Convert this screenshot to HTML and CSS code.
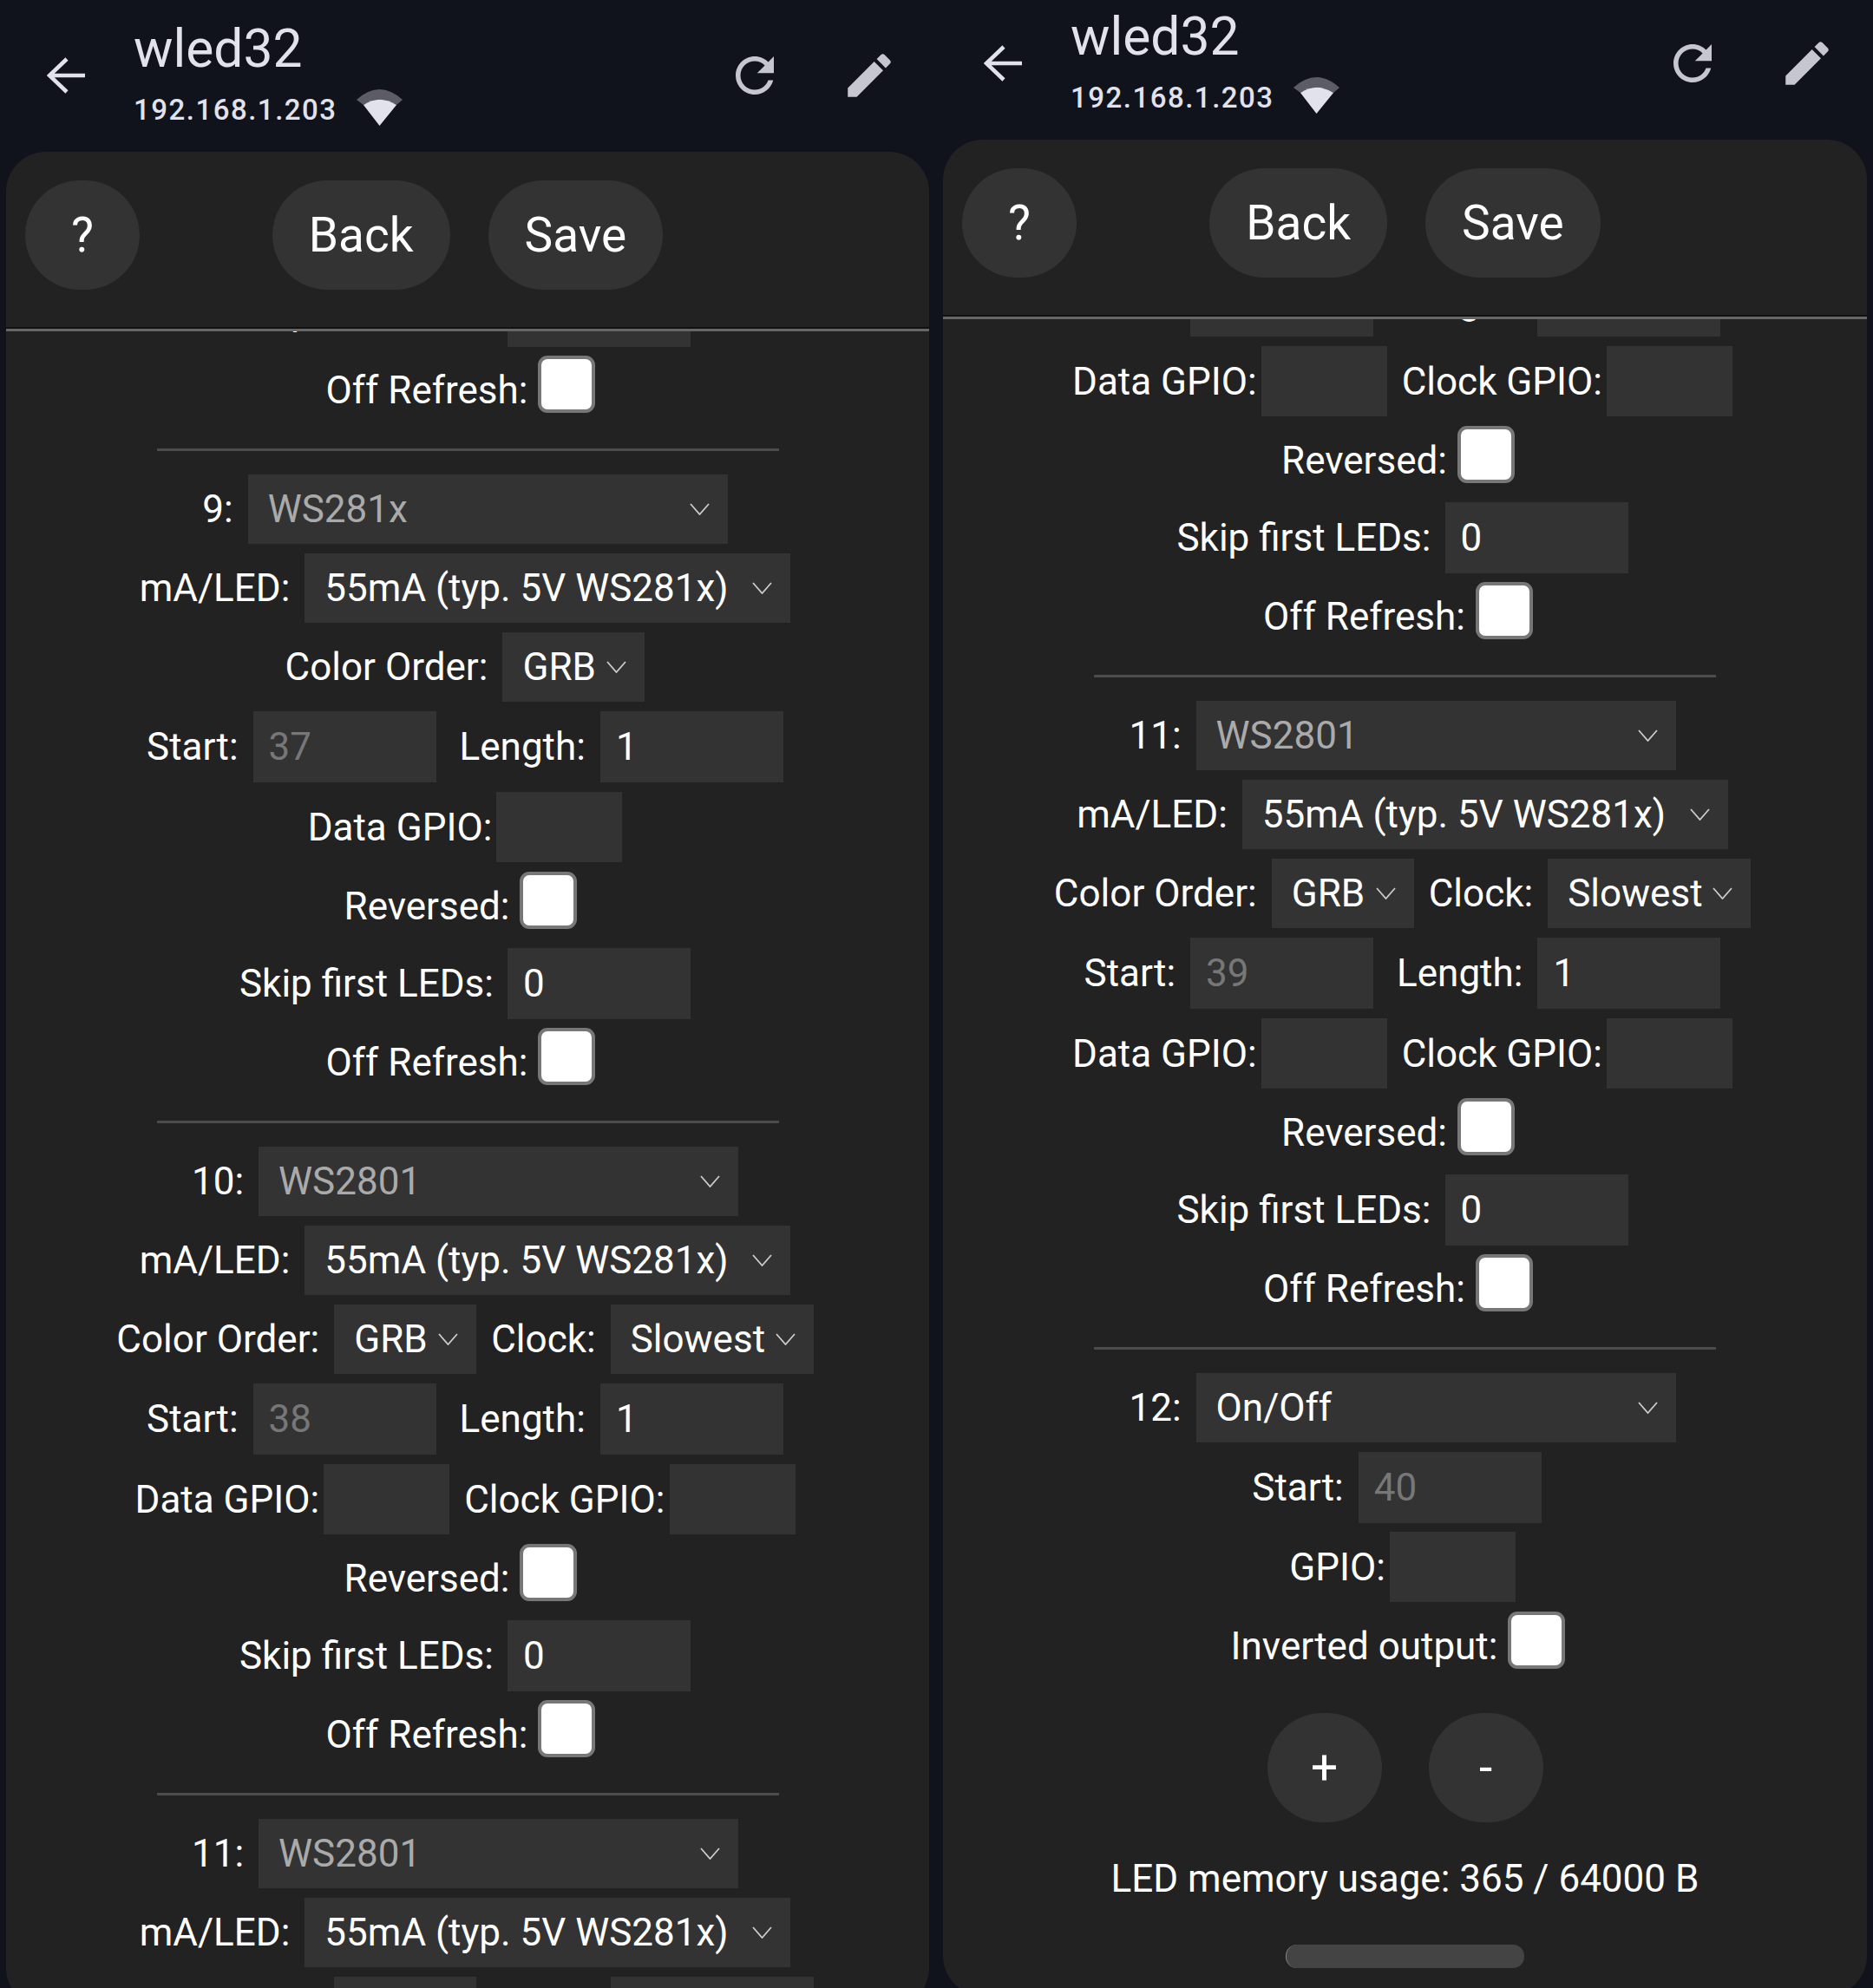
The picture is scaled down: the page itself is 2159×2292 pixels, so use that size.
FILE: index.html
```html
<!DOCTYPE html>
<html lang="en">

<head>
    <meta charset="UTF-8" />
    <meta name="viewport" content="width=device-width, initial-scale=1.0" />
    <title>wled32 LED settings</title>
    <link rel="stylesheet" href="styles.css">
</head>

<body>
    <svg class="defs" width="0" height="0">
        <defs>
            <symbol id="chev" viewBox="0 0 23 14"><path d="M1 1l10.5 12L22 1" fill="none" stroke="currentColor" stroke-width="1.8" /></symbol>
            <symbol id="back" viewBox="0 0 44 42"><path d="M44 21H3M23 2L3 21l20 19" fill="none" stroke="currentColor" stroke-width="4.6" /></symbol>
            <symbol id="wifi" viewBox="0 0 53 42">
                <path d="M0 12Q26.500 -12 53 12L46 18Q26.500 5.400 8 18Z" fill="#5b5c66" />
                <path d="M8 18Q26.500 5.400 46 18L26.500 42Z" fill="#e2e2ec" />
            </symbol>
            <symbol id="refresh" viewBox="0 0 24 24"><path d="M17.650 6.350C16.200 4.900 14.210 4 12 4c-4.420 0-7.990 3.580-7.990 8s3.570 8 7.990 8c3.730 0 6.840-2.550 7.730-6h-2.080c-.82 2.330-3.040 4-5.650 4-3.310 0-6-2.690-6-6s2.690-6 6-6c1.660 0 3.140.69 4.220 1.780L13 11h7V4l-2.350 2.350z" fill="currentColor" /></symbol>
            <symbol id="edit" viewBox="0 0 24 24"><path d="M3 17.250V21h3.750L17.810 9.940l-3.750-3.750L3 17.250zM20.710 7.040c.39-.39.39-1.020 0-1.410l-2.340-2.340c-.39-.39-1.020-.39-1.410 0l-1.830 1.830 3.750 3.750 1.830-1.830z" fill="currentColor" /></symbol>
        </defs>
    </svg>

    <div class="phones">

        <!-- left screenshot -->
        <div class="phone phone-left">
            <div class="header">
                <svg class="back"><use href="#back" /></svg>
                <div class="device">
                    <div class="device-name">wled32</div>
                    <div class="device-ip">192.168.1.203 <svg class="wifi"><use href="#wifi" /></svg></div>
                </div>
                <div class="actions">
                    <svg class="action"><use href="#refresh" /></svg>
                    <svg class="action"><use href="#edit" /></svg>
                </div>
            </div>
            <div class="panel">
                <div class="topbar">
                    <div class="btn btn-round">?</div>
                    <div class="topbar-main">
                        <div class="btn">Back</div>
                        <div class="btn">Save</div>
                    </div>
                </div>
                <div class="scroll">
                    <div class="scroll-inner scroll-left">
                        <div class="row row-skip">
                            <span class="label">Skip first LEDs:</span>
                            <div class="field num">0</div>
                        </div>
                        <div class="row row-check">
                            <span class="label">Off Refresh:</span>
                            <span class="check"></span>
                        </div>
                        <hr class="divider">

                        <div class="row">
                            <span class="label">9:</span>
                            <div class="select sel-type dim"><span>WS281x</span><svg class="chev"><use href="#chev" /></svg></div>
                        </div>
                        <div class="row">
                            <span class="label">mA/LED:</span>
                            <div class="select sel-ma"><span>55mA (typ. 5V WS281x)</span><svg class="chev"><use href="#chev" /></svg></div>
                        </div>
                        <div class="row">
                            <span class="label">Color Order:</span>
                            <div class="select sel-order"><span>GRB</span><svg class="chev"><use href="#chev" /></svg></div>
                        </div>
                        <div class="row row-num">
                            <span class="label">Start:</span>
                            <div class="field num faded">37</div>
                            <span class="label label-next">Length:</span>
                            <div class="field num">1</div>
                        </div>
                        <div class="row row-pin">
                            <span class="label">Data GPIO:</span>
                            <div class="field pin"></div>
                        </div>
                        <div class="row row-check row-check-wide">
                            <span class="label">Reversed:</span>
                            <span class="check"></span>
                        </div>
                        <div class="row row-skip">
                            <span class="label">Skip first LEDs:</span>
                            <div class="field num">0</div>
                        </div>
                        <div class="row row-check">
                            <span class="label">Off Refresh:</span>
                            <span class="check"></span>
                        </div>
                        <hr class="divider">

                        <div class="row">
                            <span class="label">10:</span>
                            <div class="select sel-type dim"><span>WS2801</span><svg class="chev"><use href="#chev" /></svg></div>
                        </div>
                        <div class="row">
                            <span class="label">mA/LED:</span>
                            <div class="select sel-ma"><span>55mA (typ. 5V WS281x)</span><svg class="chev"><use href="#chev" /></svg></div>
                        </div>
                        <div class="row">
                            <span class="label">Color Order:</span>
                            <div class="select sel-order"><span>GRB</span><svg class="chev"><use href="#chev" /></svg></div>
                            <span class="label label-next">Clock:</span>
                            <div class="select sel-clock"><span>Slowest</span><svg class="chev"><use href="#chev" /></svg></div>
                        </div>
                        <div class="row row-num">
                            <span class="label">Start:</span>
                            <div class="field num faded">38</div>
                            <span class="label label-next">Length:</span>
                            <div class="field num">1</div>
                        </div>
                        <div class="row row-pin">
                            <span class="label">Data GPIO:</span>
                            <div class="field pin"></div>
                            <span class="label label-next">Clock GPIO:</span>
                            <div class="field pin"></div>
                        </div>
                        <div class="row row-check row-check-wide">
                            <span class="label">Reversed:</span>
                            <span class="check"></span>
                        </div>
                        <div class="row row-skip">
                            <span class="label">Skip first LEDs:</span>
                            <div class="field num">0</div>
                        </div>
                        <div class="row row-check">
                            <span class="label">Off Refresh:</span>
                            <span class="check"></span>
                        </div>
                        <hr class="divider">

                        <div class="row">
                            <span class="label">11:</span>
                            <div class="select sel-type dim"><span>WS2801</span><svg class="chev"><use href="#chev" /></svg></div>
                        </div>
                        <div class="row">
                            <span class="label">mA/LED:</span>
                            <div class="select sel-ma"><span>55mA (typ. 5V WS281x)</span><svg class="chev"><use href="#chev" /></svg></div>
                        </div>
                        <div class="row">
                            <span class="label">Color Order:</span>
                            <div class="select sel-order"><span>GRB</span><svg class="chev"><use href="#chev" /></svg></div>
                            <span class="label label-next">Clock:</span>
                            <div class="select sel-clock"><span>Slowest</span><svg class="chev"><use href="#chev" /></svg></div>
                        </div>
                    </div>
                </div>
            </div>
        </div>

        <!-- right screenshot -->
        <div class="phone phone-right">
            <div class="header">
                <svg class="back"><use href="#back" /></svg>
                <div class="device">
                    <div class="device-name">wled32</div>
                    <div class="device-ip">192.168.1.203 <svg class="wifi"><use href="#wifi" /></svg></div>
                </div>
                <div class="actions">
                    <svg class="action"><use href="#refresh" /></svg>
                    <svg class="action"><use href="#edit" /></svg>
                </div>
            </div>
            <div class="panel">
                <div class="topbar">
                    <div class="btn btn-round">?</div>
                    <div class="topbar-main">
                        <div class="btn">Back</div>
                        <div class="btn">Save</div>
                    </div>
                </div>
                <div class="scroll">
                    <div class="scroll-inner scroll-right">
                        <div class="row row-num">
                            <span class="label">Start:</span>
                            <div class="field num faded">38</div>
                            <span class="label label-next">Length:</span>
                            <div class="field num">1</div>
                        </div>
                        <div class="row row-pin">
                            <span class="label">Data GPIO:</span>
                            <div class="field pin"></div>
                            <span class="label label-next">Clock GPIO:</span>
                            <div class="field pin"></div>
                        </div>
                        <div class="row row-check row-check-wide">
                            <span class="label">Reversed:</span>
                            <span class="check"></span>
                        </div>
                        <div class="row row-skip">
                            <span class="label">Skip first LEDs:</span>
                            <div class="field num">0</div>
                        </div>
                        <div class="row row-check">
                            <span class="label">Off Refresh:</span>
                            <span class="check"></span>
                        </div>
                        <hr class="divider">

                        <div class="row">
                            <span class="label">11:</span>
                            <div class="select sel-type dim"><span>WS2801</span><svg class="chev"><use href="#chev" /></svg></div>
                        </div>
                        <div class="row">
                            <span class="label">mA/LED:</span>
                            <div class="select sel-ma"><span>55mA (typ. 5V WS281x)</span><svg class="chev"><use href="#chev" /></svg></div>
                        </div>
                        <div class="row">
                            <span class="label">Color Order:</span>
                            <div class="select sel-order"><span>GRB</span><svg class="chev"><use href="#chev" /></svg></div>
                            <span class="label label-next">Clock:</span>
                            <div class="select sel-clock"><span>Slowest</span><svg class="chev"><use href="#chev" /></svg></div>
                        </div>
                        <div class="row row-num">
                            <span class="label">Start:</span>
                            <div class="field num faded">39</div>
                            <span class="label label-next">Length:</span>
                            <div class="field num">1</div>
                        </div>
                        <div class="row row-pin">
                            <span class="label">Data GPIO:</span>
                            <div class="field pin"></div>
                            <span class="label label-next">Clock GPIO:</span>
                            <div class="field pin"></div>
                        </div>
                        <div class="row row-check row-check-wide">
                            <span class="label">Reversed:</span>
                            <span class="check"></span>
                        </div>
                        <div class="row row-skip">
                            <span class="label">Skip first LEDs:</span>
                            <div class="field num">0</div>
                        </div>
                        <div class="row row-check">
                            <span class="label">Off Refresh:</span>
                            <span class="check"></span>
                        </div>
                        <hr class="divider">

                        <div class="row">
                            <span class="label">12:</span>
                            <div class="select sel-type"><span>On/Off</span><svg class="chev"><use href="#chev" /></svg></div>
                        </div>
                        <div class="row row-num row-start">
                            <span class="label">Start:</span>
                            <div class="field num faded">40</div>
                        </div>
                        <div class="row row-pin">
                            <span class="label">GPIO:</span>
                            <div class="field pin"></div>
                        </div>
                        <div class="row row-check">
                            <span class="label">Inverted output:</span>
                            <span class="check"></span>
                        </div>

                        <div class="add-remove">
                            <div class="btn btn-round">+</div>
                            <div class="btn btn-round">-</div>
                        </div>
                        <div class="memory">LED memory usage: 365 / 64000 B</div>
                        <div class="scroll-pill"></div>
                    </div>
                </div>
            </div>
        </div>

    </div>
</body>

</html>
```

FILE: styles.css
```css
* {
    box-sizing: border-box;
}

body {
    margin: 0;
    width: 2159px;
    height: 2292px;
    overflow: hidden;
    background: #10131b;
    color: #fff;
    font-family: Roboto, "Liberation Sans", sans-serif;
    font-size: 44px;
}

.defs {
    position: absolute;
}

.phones {
    display: grid;
    grid-template-columns: 1080px 1079px;
    height: 2292px;
}

.phone {
    display: flex;
    flex-direction: column;
    height: 2292px;
    overflow: hidden;
    padding: 0 7px;
}

.phone-left {
    padding: 14px 9px 0 7px;
}

/* header */
.header {
    display: flex;
    align-items: center;
    flex: none;
    height: 146px;
    margin-bottom: 15px;
    padding-left: 47px;
    padding-right: 36px;
    color: #e2e2ec;
}

.back {
    flex: none;
    width: 44px;
    height: 42px;
    margin-right: 56px;
}

.device {
    margin-top: -5px;
}

.device-name {
    font-size: 60.500px;
    line-height: 72px;
}

.device-ip {
    display: flex;
    align-items: center;
    gap: 22px;
    font-size: 33px;
    font-weight: 500;
    letter-spacing: 1.500px;
    line-height: 42px;
    margin-top: 13px;
}

.wifi {
    width: 53px;
    height: 42px;
    margin-top: -6px;
}

.actions {
    display: flex;
    gap: 66px;
    margin-left: auto;
    color: #c6c6d0;
}

.action {
    width: 66px;
    height: 66px;
}

/* panel */
.panel {
    display: flex;
    flex-direction: column;
    flex: none;
    height: 2140px;
    background: #222;
    border-radius: 46px;
    overflow: hidden;
}

.topbar {
    display: grid;
    grid-template-columns: 1fr auto 1fr;
    flex: none;
    height: 207px;
    padding: 33px 22px 0;
    border-bottom: 3px solid #666;
    box-shadow: inset 0 -2px 0 #111;
}

.topbar-main {
    display: flex;
    gap: 44px;
}

.btn {
    display: flex;
    align-items: center;
    justify-content: center;
    height: 126px;
    padding: 0 42px;
    background: #333;
    border-radius: 63px;
    font-size: 55px;
}

.btn-round {
    width: 132px;
    padding: 0;
}

/* scrolled form */
.scroll {
    flex: 1;
    overflow: hidden;
}

.scroll-left {
    margin-top: -64px;
}

.scroll-right {
    margin-top: -62px;
}

.row {
    display: flex;
    align-items: center;
    justify-content: center;
    margin-bottom: 11px;
    padding-right: 6px;
}

.row-skip {
    margin-bottom: 10px;
}

.row-skip .label {
    margin-right: 16px;
}

.row-check {
    align-items: flex-end;
    padding-right: 16px;
}

.row-check .label {
    margin-right: 12px;
}

.row-check-wide {
    margin-bottom: 22px;
}

.row-start {
    margin-bottom: 10px;
    padding-right: 19px;
}

.label {
    margin-right: 17px;
    white-space: nowrap;
}

.label-next {
    margin-left: 17px;
}

.row-num .label-next {
    margin-left: 27px;
}

.row-pin .label {
    margin-right: 5px;
}

.row-pin .label-next {
    margin-left: 17px;
}

.select {
    display: flex;
    align-items: center;
    justify-content: space-between;
    height: 80px;
    padding: 0 21px 0 23px;
    background: #333;
    white-space: nowrap;
}

.sel-type {
    width: 553px;
}

.sel-ma {
    width: 560px;
}

.sel-order {
    width: 164px;
}

.sel-clock {
    width: 234px;
}

.dim {
    color: #aaa;
}

.chev {
    flex: none;
    width: 23px;
    height: 14px;
    color: #ccc;
}

.field {
    display: flex;
    align-items: center;
    background: #333;
}

.num {
    width: 211px;
    height: 82px;
    padding-left: 18px;
}

.pin {
    width: 145px;
    height: 81px;
}

.faded {
    color: #777;
}

.check {
    flex: none;
    width: 66px;
    height: 66px;
    background: #fff;
    border: 4px solid #777;
    border-radius: 11px;
}

.divider {
    width: 717px;
    height: 3px;
    margin: 41px auto 27px;
    border: none;
    background: #4c4c4c;
}

.add-remove {
    display: flex;
    justify-content: center;
    gap: 54px;
    margin-top: 51px;
}

.memory {
    margin-top: 39px;
    text-align: center;
}

.scroll-pill {
    width: 275px;
    height: 27px;
    margin: 50px auto 0;
    background: #444;
    border-left: 1px solid #888;
    border-radius: 13px;
}
```
